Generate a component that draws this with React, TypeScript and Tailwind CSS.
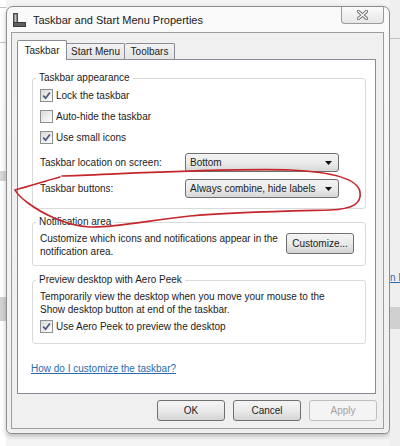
import React from "react";

const CheckBox = ({ checked }: { checked?: boolean }) => (
  <span className="w-[13px] h-[13px] shrink-0 border border-[#8e8f8f] bg-white flex items-center justify-center">
    <span className="w-[11px] h-[11px] bg-linear-to-br from-[#dadada] to-[#fdfdfd] flex items-center justify-center">
      {checked && (
        <svg width="9" height="9" viewBox="0 0 9 9">
          <path d="M1.2 4.6 L3.6 7.2 L7.9 1.4" stroke="#4c5a7c" strokeWidth="1.7" fill="none" />
        </svg>
      )}
    </span>
  </span>
);

const CheckRow = ({ checked, label }: { checked?: boolean; label: string }) => (
  <div className="h-[21px] flex items-center gap-[3px]">
    <CheckBox checked={checked} />
    <span>{label}</span>
  </div>
);

const Dropdown = ({ value }: { value: string }) => (
  <div className="w-[154px] h-[19px] border border-[#707070] rounded-[3px] bg-linear-to-b from-[#f3f3f3] via-[#ebebeb] to-[#d8d8d8] flex items-center pl-[4px] pr-[6px]">
    <span className="flex-1">{value}</span>
    <svg width="7" height="4" viewBox="0 0 7 4">
      <path d="M0 0h7L3.5 4z" fill="#111" />
    </svg>
  </div>
);

const WinButton = ({ label, disabled }: { label: string; disabled?: boolean }) => (
  <div
    className={
      disabled
        ? "w-[68px] h-[21px] border border-[#bfbfbf] rounded-[3px] bg-[#f4f4f4] text-[#a3a3a3] flex items-center justify-center"
        : "w-[68px] h-[21px] border border-[#707070] rounded-[3px] bg-linear-to-b from-[#f4f4f4] via-[#eaeaea] to-[#d4d4d4] flex items-center justify-center"
    }
  >
    {label}
  </div>
);

const GroupLabel = ({ text }: { text: string }) => (
  <div className="-mt-[8px] ml-[-4px] w-fit bg-white px-[3px] h-[14px] leading-[14px]">{text}</div>
);

export default function App() {
  return (
    <div className="relative w-[400px] h-[446px] overflow-hidden flex bg-[#f4f4f4] text-[10px] leading-[13px] text-[#1c1c1c] font-['Liberation_Sans',Arial,sans-serif]">
      {/* desktop behind, left side */}
      <div className="w-[6px] shrink-0 bg-white flex flex-col">
        <div className="mt-[7px] h-px bg-[#c4c4c4]" />
        <div className="mt-[34px] h-px bg-[#c4c4c4]" />
        <div className="mt-[128px] h-[10px] bg-[#d6d6d6]" />
        <div className="mt-[116px] h-[24px] bg-[#d2d2d2]" />
      </div>

      {/* dialog window */}
      <div className="mt-[6px] w-[384px] h-[428px] shrink-0 flex flex-col border border-[#8d8d8d] rounded-t-[7px] rounded-b-[5px] bg-linear-to-b from-[#fafafa] to-[#efefef] shadow-[0_2px_5px_rgba(0,0,0,0.25)]">
        {/* title bar */}
        <div className="h-[25px] shrink-0 flex">
          <div className="flex items-center pl-[6px] gap-[7px] pt-[1px]">
            <svg width="13" height="14" viewBox="0 0 13 14">
              <rect x="0.5" y="0.5" width="4" height="13" fill="#8a8a8a" stroke="#4a4a4a" />
              <rect x="0.5" y="9.5" width="12" height="4" fill="#5e5e5e" stroke="#3a3a3a" />
              <rect x="2" y="2" width="1" height="7" fill="#c8c8c8" />
            </svg>
            <span className="text-[11px] text-[#202020]">Taskbar and Start Menu Properties</span>
          </div>
          <div className="ml-auto mr-[5px] w-[43px] h-[17px] border-x border-b border-[#9a9a9a] rounded-b-[4px] bg-linear-to-b from-[#fbfbfb] to-[#e6e6e6] flex items-center justify-center">
            <svg width="11" height="10" viewBox="0 0 11 10">
              <path d="M1.5 1.5 L9.5 8.5 M9.5 1.5 L1.5 8.5" stroke="#6e6e6e" strokeWidth="3.2" strokeLinecap="square" />
              <path d="M1.5 1.5 L9.5 8.5 M9.5 1.5 L1.5 8.5" stroke="#ffffff" strokeWidth="1.3" strokeLinecap="square" />
            </svg>
          </div>
        </div>

        {/* client area */}
        <div className="ml-[4px] mr-[5px] mb-[4px] flex-1 border border-[#9d9d9d] bg-[#f0f0f0] flex flex-col pt-[7px] pl-[5px] pr-[7px]">
          {/* tabs */}
          <div className="h-[19px] flex items-end shrink-0">
            <div className="relative z-10 -mb-px w-[50px] h-[20px] bg-white border border-b-0 border-[#898c95] rounded-t-[2px] flex items-center justify-center">
              Taskbar
            </div>
            <div className="w-[58px] h-[16px] border border-l-0 border-b-0 border-[#898c95] rounded-tr-[2px] bg-linear-to-b from-[#f3f3f3] to-[#e3e3e3] flex items-center justify-center">
              Start Menu
            </div>
            <div className="w-[50px] h-[16px] border border-l-0 border-b-0 border-[#898c95] rounded-t-[2px] bg-linear-to-b from-[#f3f3f3] to-[#e3e3e3] flex items-center justify-center">
              Toolbars
            </div>
          </div>

          {/* tab panel */}
          <div className="h-[335px] shrink-0 border border-[#898c95] bg-white flex flex-col pl-[14px]">
            {/* Taskbar appearance */}
            <div className="mt-[18px] w-[334px] border border-[#dadada] rounded-[3px] pl-[7px] pb-[10px]">
              <GroupLabel text="Taskbar appearance" />
              <CheckRow checked label="Lock the taskbar" />
              <CheckRow label="Auto-hide the taskbar" />
              <CheckRow checked label="Use small icons" />
              <div className="mt-[5px] h-[19px] flex items-center">
                <span className="w-[145px]">Taskbar location on screen:</span>
                <Dropdown value="Bottom" />
              </div>
              <div className="mt-[7px] h-[19px] flex items-center">
                <span className="w-[145px]">Taskbar buttons:</span>
                <Dropdown value="Always combine, hide labels" />
              </div>
            </div>

            {/* Notification area */}
            <div className="mt-[13px] w-[334px] border border-[#dadada] rounded-[3px] pl-[7px] pr-[11px] pb-[7px]">
              <GroupLabel text="Notification area" />
              <div className="flex items-start justify-between">
                <p className="mt-[3px]">
                  Customize which icons and notifications appear in the
                  <br />
                  notification area.
                </p>
                <div className="mt-[4px]">
                  <WinButton label="Customize..." />
                </div>
              </div>
            </div>

            {/* Aero Peek */}
            <div className="mt-[14px] w-[334px] border border-[#dadada] rounded-[3px] pl-[7px] pb-[7px]">
              <GroupLabel text="Preview desktop with Aero Peek" />
              <p className="mt-[3px]">
                Temporarily view the desktop when you move your mouse to the
                <br />
                Show desktop button at end of the taskbar.
              </p>
              <div className="h-[20px] flex items-center gap-[3px]">
                <CheckBox checked />
                <span>Use Aero Peek to preview the desktop</span>
              </div>
            </div>

            <a className="mt-[18px] -ml-px w-fit h-[14px] leading-[14px] text-[#2a6bb0] underline">
              How do I customize the taskbar?
            </a>
          </div>

          {/* dialog buttons */}
          <div className="mt-[6px] -mr-px flex justify-end gap-[8px]">
            <WinButton label="OK" />
            <WinButton label="Cancel" />
            <WinButton label="Apply" disabled />
          </div>
        </div>
      </div>

      {/* desktop behind, right side */}
      <div className="w-[10px] shrink-0 bg-[#efefef] flex flex-col">
        <div className="mt-[38px] h-px bg-[#bdbdbd]" />
        <div className="mt-[232px] h-[14px] leading-[14px] text-[#2a6bb0] underline whitespace-nowrap">n I</div>
        <div className="mt-[22px] h-[22px] bg-[#d0d0d0]" />
      </div>

      {/* red hand-drawn mark */}
      <svg className="absolute inset-0 pointer-events-none" width="400" height="446" viewBox="0 0 400 446">
        <path
          d="M62 176 C120 174 230 168 290 170 C335 172 358 180 360 192 C362 204 352 209 330 210 C290 211 230 212 190 216 C150 220 115 228 90 227 C65 226 40 212 28 203 C20 197 16 192 15 190 C30 186 45 181 60 177"
          stroke="#c4262c"
          strokeWidth="1.6"
          fill="none"
          strokeLinecap="round"
        />
      </svg>
    </div>
  );
}
